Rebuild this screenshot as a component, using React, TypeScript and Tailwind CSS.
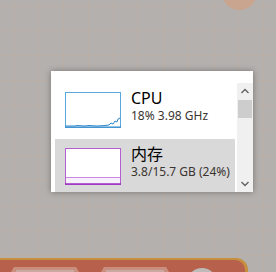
import React from "react";

const CpuGraph = () => (
  <svg width="56" height="36" viewBox="0 0 56 36" className="block shrink-0">
    <rect x="0.5" y="0.5" width="55" height="35" fill="#ffffff" stroke="#5aa7dc" />
    <polyline
      points="1,34 10,34 12,33.5 20,34 24,33.5 32,34 40,33.5 44,33 46,31 48,32 50,29 52,30 53,27 55,26"
      fill="none"
      stroke="#2f86c8"
      strokeWidth="1"
    />
    <line x1="0" y1="35" x2="56" y2="35" stroke="#2f86c8" strokeWidth="1.2" />
  </svg>
);

const MemGraph = () => (
  <svg width="56" height="37" viewBox="0 0 56 37" className="block shrink-0">
    <rect x="0.5" y="0.5" width="55" height="36" fill="#ffffff" stroke="#b45fd0" />
    <rect x="1" y="29.5" width="54" height="6.5" fill="#f7f0fa" />
    <line x1="1" y1="29.5" x2="55" y2="29.5" stroke="#c98be0" strokeWidth="1" />
    <line x1="0" y1="36" x2="56" y2="36" stroke="#9a2ec0" strokeWidth="1.5" />
  </svg>
);

const Row = ({
  graph,
  title,
  sub,
  active,
}: {
  graph: React.ReactNode;
  title: string;
  sub: string;
  active?: boolean;
}) => (
  <div
    className={`flex items-start h-[56px] pl-[10px] pt-[9px] ${
      active ? "bg-[#d9d9d9]" : "bg-white"
    }`}
  >
    {graph}
    <div className="ml-[10px] -mt-[4px] flex flex-col">
      <span className="text-[16px] leading-[20px] text-black">{title}</span>
      <span className="mt-[1px] text-[12px] leading-[14px] text-[#3a3530]">
        {sub}
      </span>
    </div>
  </div>
);

export default function App() {
  return (
    <div
      className="relative w-[276px] h-[272px] overflow-hidden bg-[#b4b0ad]"
      style={{
        backgroundImage:
          "linear-gradient(to right, rgba(200,170,150,0.35) 1px, transparent 1px), linear-gradient(to bottom, rgba(200,170,150,0.3) 1px, transparent 1px)",
        backgroundSize: "25px 25px",
        backgroundPosition: "13px 5px",
        fontFamily: '"Noto Sans", "Noto Sans CJK SC", sans-serif',
      }}
    >
      {/* top-right blob */}
      <div className="absolute left-[222px] top-[-26px] w-[35px] h-[36px] rounded-full bg-[#c9a590]" />

      {/* bottom bar */}
      <div className="absolute left-[-10px] top-[258px] w-[258px] h-[30px] rounded-tr-[12px] bg-[#c58f3e] pt-[2px] pr-[3px]">
        <div className="relative w-full h-full rounded-tr-[10px] bg-[#b7604c]">
          <div className="absolute left-[18px] top-[7px] w-[74px] h-[20px] bg-[#c98e7d] [clip-path:polygon(8%_0,92%_0,100%_50%,100%_100%,0_100%,0_50%)]">
            <div className="mx-[8px] mt-[3px] h-full bg-[#c8aaa2]" />
          </div>
          <div className="absolute left-[108px] top-[7px] w-[74px] h-[20px] bg-[#c98e7d] [clip-path:polygon(8%_0,92%_0,100%_50%,100%_100%,0_100%,0_50%)]">
            <div className="mx-[8px] mt-[3px] h-full bg-[#c8aaa2]" />
          </div>
          <div className="absolute left-[197px] top-[8px] w-[30px] h-[30px] rounded-full bg-[#bdbab8]" />
        </div>
      </div>

      {/* popup */}
      <div className="absolute left-[51px] top-[71px] w-[202px] h-[121px] bg-white shadow-[0_0_6px_rgba(0,0,0,0.35)] pt-[12px] pl-[4px] flex">
        <div className="flex-1 overflow-hidden">
          <Row graph={<CpuGraph />} title="CPU" sub="18% 3.98 GHz" />
          <Row graph={<MemGraph />} title="内存" sub="3.8/15.7 GB (24%)" active />
        </div>
        <div className="w-[16px] ml-[2px] bg-[#f0f0f0] flex flex-col items-center">
          <svg width="16" height="17" viewBox="0 0 16 17" className="block">
            <path d="M4.5 10 L8 6.5 L11.5 10" fill="none" stroke="#606060" strokeWidth="1.3" />
          </svg>
          <div className="w-[14px] h-[18px] bg-[#cdcdcd]" />
          <div className="flex-1" />
          <svg width="16" height="17" viewBox="0 0 16 17" className="block">
            <path d="M4.5 7 L8 10.5 L11.5 7" fill="none" stroke="#606060" strokeWidth="1.3" />
          </svg>
        </div>
      </div>
    </div>
  );
}
